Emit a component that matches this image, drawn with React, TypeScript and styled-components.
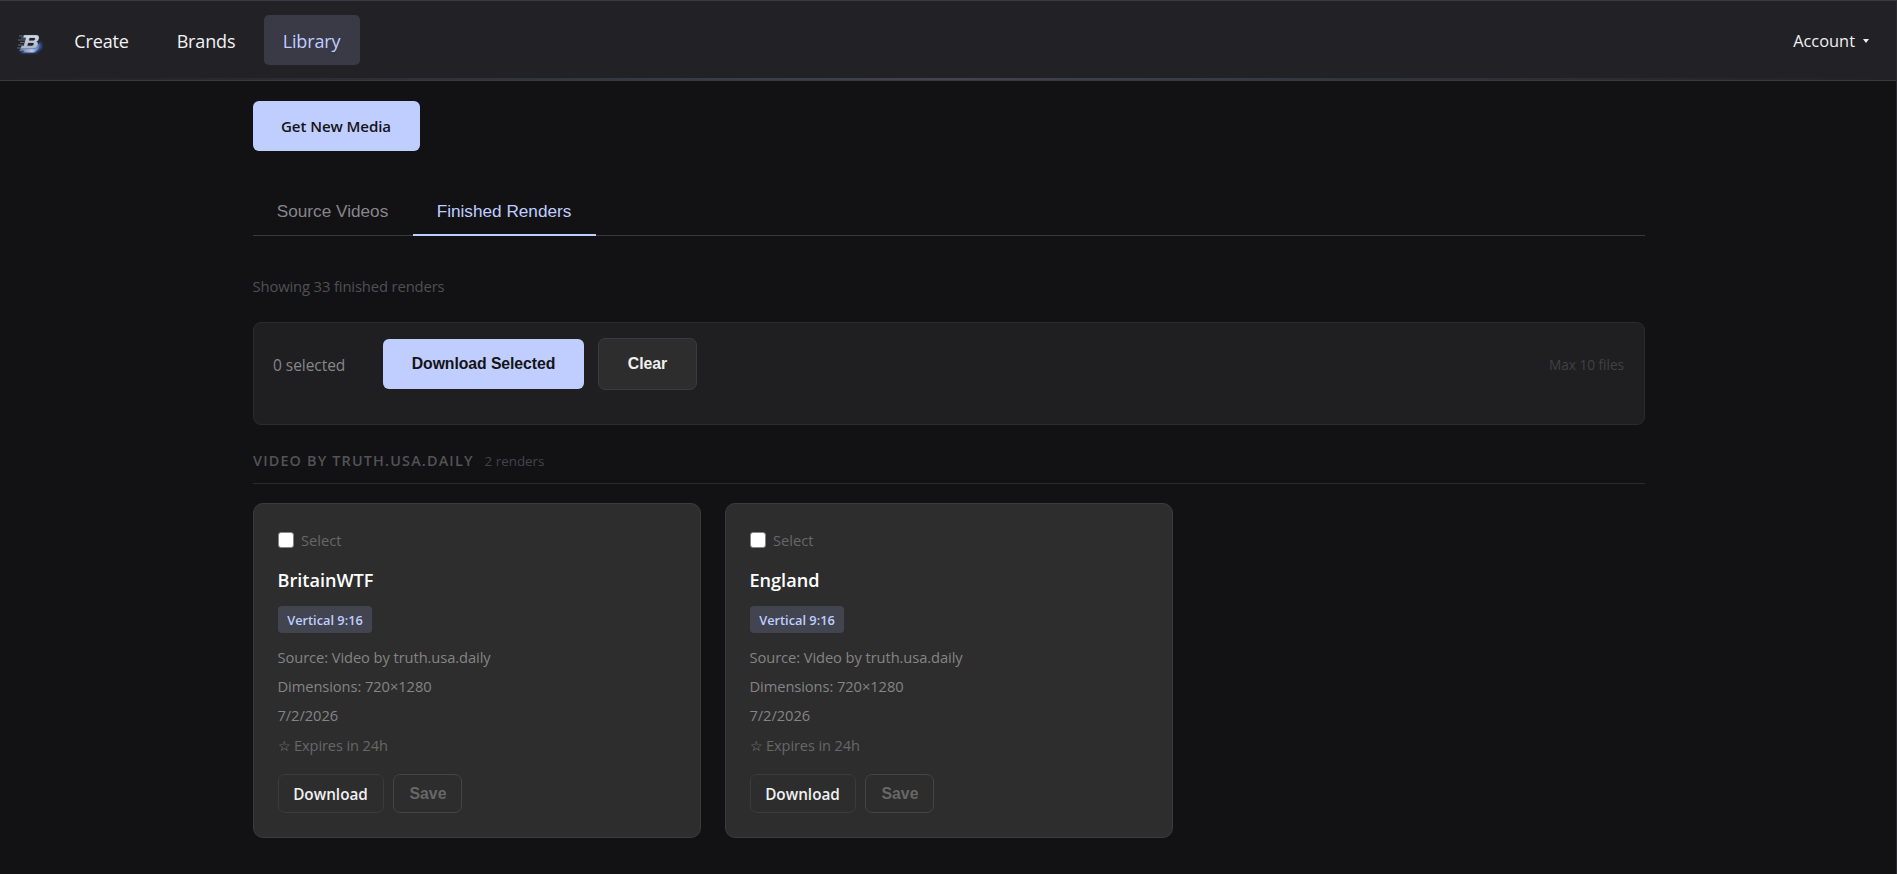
import React from "react";
import styled, { createGlobalStyle } from "styled-components";

const GlobalStyle = createGlobalStyle`
  *, *::before, *::after { box-sizing: border-box; }
  html, body { margin: 0; background: #121214; }
  body {
    font-family: "Open Sans", "Noto Sans", sans-serif;
    color: #f0f0f2;
    overflow: hidden;
  }
  button { cursor: pointer; }
`;

const arial = `"Liberation Sans", Arial, sans-serif`;

const Page = styled.div`
  height: 874px;
  border-top: 1px solid #3a3a44;
  border-right: 1px solid #2c2c30;
  background: #121214;
`;

const Header = styled.header`
  position: relative;
  display: flex;
  align-items: center;
  height: 80px;
  padding: 0 27px 0 17px;
  background: #212126;
  border-bottom: 1px solid #3a3a3d;

  &::after {
    content: "";
    position: absolute;
    left: 0;
    right: 0;
    bottom: 0;
    height: 2px;
    background: linear-gradient(90deg, transparent, #c0ceff, transparent);
    opacity: 0.2;
  }
`;

const Logo = styled.svg`
  width: 28px;
  height: 24px;
  margin-top: 7px;
  flex: none;
`;

const Nav = styled.nav`
  display: flex;
  gap: 10px;
  margin-left: 10px;
  margin-top: -2px;
`;

const NavLink = styled.a<{ $active?: boolean; $width: number }>`
  display: flex;
  align-items: center;
  justify-content: center;
  width: ${(p) => p.$width}px;
  height: 50px;
  padding: 2px 1px 0 0;
  border-radius: 5px;
  font-size: 18px;
  letter-spacing: -0.15px;
  color: ${(p) => (p.$active ? "#c0ceff" : "#f2f2f4")};
  background: ${(p) => (p.$active ? "#393a46" : "transparent")};
`;

const Account = styled.button`
  display: flex;
  align-items: center;
  gap: 8px;
  margin: 0 0 0 auto;
  padding: 0;
  border: 0;
  background: none;
  color: #f0f0f2;
  font: 16.4px "Open Sans", sans-serif;
`;

const Caret = styled.i`
  border: 3.5px solid transparent;
  border-top: 4.5px solid currentColor;
  border-bottom: 0;
`;

const Main = styled.main`
  width: 1392px;
  margin: 20px 0 0 253px;
  display: flex;
  flex-direction: column;
`;

const PrimaryButton = styled.button<{ $width: number; $arial?: boolean }>`
  width: ${(p) => p.$width}px;
  height: 50px;
  padding: ${(p) => (p.$arial ? "0" : "0 1px 0 0")};
  border: 0;
  border-radius: 6px;
  background: #c0ceff;
  color: #141416;
  font: ${(p) => (p.$arial ? `700 15.8px ${arial}` : `600 15.1px "Open Sans", sans-serif`)};
  letter-spacing: ${(p) => (p.$arial ? -0.08 : -0.1)}px;
`;

const Tabs = styled.div`
  display: flex;
  height: 50px;
  margin-top: 35px;
  border-bottom: 1px solid #3a3a3c;
`;

const Tab = styled.button<{ $active?: boolean; $width: number }>`
  width: ${(p) => p.$width}px;
  height: 50px;
  padding: 2px 1px 0 0;
  border: 0;
  border-bottom: 2px solid ${(p) => (p.$active ? "#c0ceff" : "transparent")};
  background: none;
  color: ${(p) => (p.$active ? "#c0ceff" : "#86868a")};
  font: 17.2px ${arial};
`;

const Summary = styled.p`
  margin: 39px 0 0 -0.5px;
  font-size: 14.8px;
  line-height: 22px;
  letter-spacing: -0.14px;
  color: #505053;
`;

const BulkBar = styled.section`
  display: flex;
  align-items: flex-start;
  height: 103px;
  margin-top: 25px;
  padding: 15px 20px 0 19px;
  border: 1px solid #2b2b2e;
  border-radius: 8px;
  background: #1f1f21;
`;

const SelectedCount = styled.span`
  width: 110px;
  font-size: 15.5px;
  line-height: 22px;
  letter-spacing: -0.05px;
  margin-top: 16px;
  color: #86868a;
`;

const BulkActions = styled.div`
  display: flex;
  align-items: center;
  gap: 14px;
`;

const ClearButton = styled.button`
  width: 99px;
  height: 52px;
  padding: 0;
  border: 1px solid #3b3b3d;
  border-radius: 7px;
  background: #2d2d2d;
  color: #f0f0ee;
  font: 700 15.8px ${arial};
  letter-spacing: -0.05px;
`;

const Limit = styled.span`
  margin: 16px 0 0 auto;
  font-size: 13.7px;
  line-height: 22px;
  letter-spacing: -0.05px;
  color: #404043;
`;

const GroupHeader = styled.div`
  display: flex;
  align-items: baseline;
  gap: 11px;
  height: 59px;
  padding-top: 25px;
  border-bottom: 1px solid #2b2b2e;
`;

const GroupTitle = styled.h2`
  margin: 0;
  font-size: 14.4px;
  font-weight: 600;
  line-height: 22px;
  letter-spacing: 1.17px;
  text-transform: uppercase;
  color: #535356;
`;

const GroupCount = styled.span`
  font-size: 13.4px;
  color: #444447;
`;

const Grid = styled.div`
  display: grid;
  grid-template-columns: repeat(3, 448px);
  gap: 24px;
  margin-top: 19px;
`;

const Card = styled.article`
  display: flex;
  flex-direction: column;
  align-items: flex-start;
  height: 335px;
  padding: 24px;
  border: 1px solid #3b3b3d;
  border-radius: 10px;
  background: #2d2d2d;
`;

const SelectLabel = styled.label`
  display: flex;
  align-items: center;
  gap: 7px;
  height: 22px;
  margin-top: 1px;
  font-size: 14.7px;
  color: #67676a;
`;

const Checkbox = styled.input`
  appearance: none;
  width: 16px;
  height: 16px;
  margin: 0 0 1px;
  border: 1px solid #858585;
  border-radius: 3px;
  background: #fff;
`;

const CardTitle = styled.h3`
  margin: 16px 0 0 -0.5px;
  font-size: 18.1px;
  font-weight: 600;
  line-height: 26px;
  letter-spacing: 0;
  color: #fff;
`;

const Badge = styled.span`
  width: 94px;
  height: 27px;
  margin-top: 13px;
  padding-top: 1px;
  border-radius: 4px;
  background: #42444f;
  color: #c0ceff;
  font-size: 12.8px;
  font-weight: 600;
  line-height: 27px;
  text-align: center;
`;

const Details = styled.div`
  margin: 10px 0 0 -0.5px;
  font-size: 14.7px;
  line-height: 29px;
  letter-spacing: -0.08px;
  color: #848484;
`;

const Expiry = styled.div`
  display: flex;
  align-items: center;
  gap: 4px;
  height: 30px;
  font-size: 14.6px;
  letter-spacing: -0.1px;
  color: #676767;
`;

const Star = styled.span`
  width: 12px;
  padding-top: 1px;
  color: #808080;
  font: 14px "DejaVu Sans", sans-serif;
`;

const CardActions = styled.div`
  display: flex;
  gap: 9px;
  margin-top: 14px;
`;

const CardButton = styled.button<{ $muted?: boolean }>`
  width: ${(p) => (p.$muted ? 69 : 106)}px;
  height: 39px;
  padding: ${(p) => (p.$muted ? "1px 0 0 1px" : "1px 1px 0 0")};
  border: 1px solid ${(p) => (p.$muted ? "#444446" : "#3b3b3d")};
  border-radius: 7px;
  background: transparent;
  color: ${(p) => (p.$muted ? "#676767" : "#f0f0f2")};
  font: ${(p) => (p.$muted ? `700 15.8px ${arial}` : `600 15.3px "Open Sans", sans-serif`)};
`;

const renders = [{ name: "BritainWTF" }, { name: "England" }];

function BrandLogo() {
  return (
    <Logo viewBox="0 0 28 24" aria-label="Home">
      <defs>
        <linearGradient id="face" x1="0" y1="0" x2="0" y2="1">
          <stop offset="0" stopColor="#d5dbe6" />
          <stop offset="1" stopColor="#a9b5cc" />
        </linearGradient>
        <linearGradient id="base" x1="0" y1="0" x2="1" y2="0">
          <stop offset="0" stopColor="#6a7ba3" />
          <stop offset="0.6" stopColor="#b9c8ea" />
          <stop offset="1" stopColor="#4669b5" />
        </linearGradient>
        <filter id="glow" x="-30%" y="-30%" width="160%" height="160%">
          <feGaussianBlur stdDeviation="1" />
        </filter>
      </defs>
      <path d="M4 17H20L23 9Q26 13 24 17L19 21H4Z" fill="#3558a4" filter="url(#glow)" />
      <path d="M3 16.5H18L22.5 11Q23.5 15 20.5 18L17 20.5H6L8 19H3.5Z" fill="url(#base)" />
      <path d="M2 4H9M4 6H9M1 8H8M3 10.5H7M1 13H6M0 16H5M2 18.5H7" stroke="#66728a" strokeWidth=".9" />
      <path
        fillRule="evenodd"
        d="M7 3H19.4Q22.6 3.4 22 6.5Q21.6 9 19.6 9.6Q21.6 10.4 21 13Q20.2 16.5 15.7 16.7H3.5L4.5 13.7H6.6L8.9 5.7H6.2ZM12.6 6L12 8.4H16.4Q17.8 8.2 18.1 6.9Q18.2 6 17.1 6ZM11.2 11L10.5 13.7H15Q16.5 13.4 16.8 12.1Q16.9 11 15.6 11Z"
        fill="url(#face)"
        stroke="#39435a"
        strokeWidth=".3"
      />
    </Logo>
  );
}

function RenderCard({ name }: { name: string }) {
  return (
    <Card>
      <SelectLabel>
        <Checkbox type="checkbox" />
        Select
      </SelectLabel>
      <CardTitle>{name}</CardTitle>
      <Badge>Vertical 9:16</Badge>
      <Details>
        <div>Source: Video by truth.usa.daily</div>
        <div>Dimensions: 720×1280</div>
        <div>7/2/2026</div>
      </Details>
      <Expiry>
        <Star>☆</Star>
        <span>Expires in 24h</span>
      </Expiry>
      <CardActions>
        <CardButton>Download</CardButton>
        <CardButton $muted>Save</CardButton>
      </CardActions>
    </Card>
  );
}

export default function App() {
  return (
    <>
      <GlobalStyle />
      <Page>
        <Header>
          <BrandLogo />
          <Nav>
            <NavLink $width={94}>Create</NavLink>
            <NavLink $width={95}>Brands</NavLink>
            <NavLink $width={96} $active>
              Library
            </NavLink>
          </Nav>
          <Account>
            Account
            <Caret />
          </Account>
        </Header>
        <Main>
          <PrimaryButton $width={167}>Get New Media</PrimaryButton>
          <Tabs>
            <Tab $width={160}>Source Videos</Tab>
            <Tab $width={183} $active>
              Finished Renders
            </Tab>
          </Tabs>
          <Summary>Showing 33 finished renders</Summary>
          <BulkBar>
            <SelectedCount>0 selected</SelectedCount>
            <BulkActions>
              <PrimaryButton $width={201} $arial>
                Download Selected
              </PrimaryButton>
              <ClearButton>Clear</ClearButton>
            </BulkActions>
            <Limit>Max 10 files</Limit>
          </BulkBar>
          <GroupHeader>
            <GroupTitle>Video by truth.usa.daily</GroupTitle>
            <GroupCount>2 renders</GroupCount>
          </GroupHeader>
          <Grid>
            {renders.map((r) => (
              <RenderCard key={r.name} name={r.name} />
            ))}
          </Grid>
        </Main>
      </Page>
    </>
  );
}
